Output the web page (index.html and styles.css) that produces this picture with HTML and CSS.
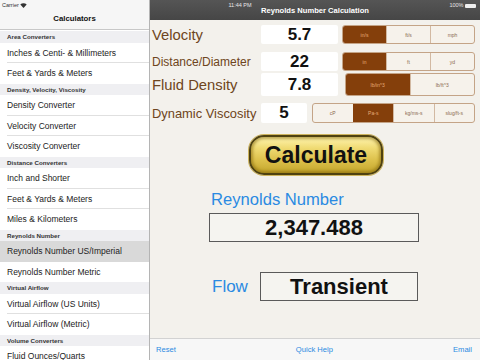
FILE: index.html
```html
<!DOCTYPE html>
<html lang="en">
<head>
  <meta charset="UTF-8">
  <title>Reynolds Number Calculation</title>
  <link rel="stylesheet" href="styles.css">
</head>
<body>

<div class="status">
  <span class="carrier">Carrier
    <svg width="7" height="5" viewBox="0 0 7 5"><path d="M3.5 5 L0.3 1.6 A4.6 4.6 0 0 1 6.7 1.6 Z" fill="#333"/></svg>
  </span>
  <span class="clock">11:44 PM</span>
  <span class="battery">100% <i class="cell"></i></span>
</div>

<div class="sidebar">
  <div class="side-nav">Calculators</div>
  <div class="list">
    <div class="peek"></div>
    <div class="sec">Area Converters</div>
    <div class="row">Inches &amp; Centi- &amp; Millimeters</div>
    <div class="row last">Feet &amp; Yards &amp; Meters</div>
    <div class="sec">Density, Velocity, Viscosity</div>
    <div class="row">Density Converter</div>
    <div class="row">Velocity Converter</div>
    <div class="row last">Viscosity Converter</div>
    <div class="sec">Distance Converters</div>
    <div class="row">Inch and Shorter</div>
    <div class="row">Feet &amp; Yards &amp; Meters</div>
    <div class="row last">Miles &amp; Kilometers</div>
    <div class="sec">Reynolds Number</div>
    <div class="row selected">Reynolds Number US/Imperial</div>
    <div class="row last">Reynolds Number Metric</div>
    <div class="sec">Virtual Airflow</div>
    <div class="row">Virtual Airflow (US Units)</div>
    <div class="row last">Virtual Airflow (Metric)</div>
    <div class="sec">Volume Converters</div>
    <div class="row last">Fluid Ounces/Quarts</div>
  </div>
</div>

<div class="main">
  <div class="main-nav">Reynolds Number Calculation</div>

  <div class="content">
    <div class="input r1">
      <span class="label big">Velocity</span>
      <span class="value">5.7</span>
      <div class="seg">
        <span class="on">in/s</span><span>ft/s</span><span>mph</span>
      </div>
    </div>
    <div class="input r2">
      <span class="label">Distance/Diameter</span>
      <span class="value">22</span>
      <div class="seg">
        <span class="on">in</span><span>ft</span><span>yd</span>
      </div>
    </div>
    <div class="input r3">
      <span class="label big">Fluid Density</span>
      <span class="value">7.8</span>
      <div class="seg">
        <span class="on">lb/in^3</span><span>lb/ft^3</span>
      </div>
    </div>
    <div class="input r4">
      <span class="label mid">Dynamic Viscosity</span>
      <span class="value short">5</span>
      <div class="seg">
        <span>cP</span><span class="on">Pa-s</span><span>kg/ms-s</span><span>slug/ft-s</span>
      </div>
    </div>

    <button class="calc">Calculate</button>

    <div class="result-title">Reynolds Number</div>
    <div class="result">2,347.488</div>

    <div class="flow">
      <span class="flow-label">Flow</span>
      <span class="result flow-box">Transient</span>
    </div>
  </div>

  <div class="toolbar">
    <span>Reset</span>
    <span>Quick Help</span>
    <span>Email</span>
  </div>
</div>

</body>
</html>
```

FILE: styles.css
```css
* { box-sizing: border-box; }
body {
  margin: 0; width: 480px; height: 360px; overflow: hidden;
  display: flex; font-family: "Liberation Sans", Arial, sans-serif;
  background: #fff;
}

/* status bar over both panes */
.status { position: absolute; top: 0; left: 0; width: 480px; height: 10px; font-size: 5.5px; }
.carrier { position: absolute; left: 2px; top: 2px; color: #333; }
.carrier svg { vertical-align: -0.5px; }
.clock { position: absolute; left: 0; right: 0; top: 2px; text-align: center; color: #e6e6e6; }
.battery { position: absolute; right: 4px; top: 2px; color: #e6e6e6; }
.cell { display: inline-block; width: 11px; height: 4px; background: #eee; border-radius: 1px; vertical-align: -0.5px; }

/* left list */
.sidebar { width: 150px; height: 360px; border-right: 1px solid #b4b4b4; overflow: hidden; flex: none; }
.side-nav {
  height: 30px; padding-top: 11px; background: #f6f6f6; border-bottom: 1px solid #c8c8c8;
  text-align: center; font-size: 7.8px; font-weight: bold; color: #111; line-height: 16px;
}
.peek { height: 1px; background: #fff; }
.sec {
  height: 11.5px; line-height: 12px; padding-left: 7px; background: #efeff2;
  font-size: 6.2px; font-weight: bold; color: #333; white-space: nowrap;
}
.row {
  height: 20.5px; line-height: 21px; padding-left: 7px; font-size: 8.5px; color: #222;
  white-space: nowrap;
  background: linear-gradient(#e0e0e0, #e0e0e0) left 7px bottom 0 / 100% 1px no-repeat #fff;
}
.row.last { background: #fff; }
.row.selected { background: #d9d9d9; }

/* right pane */
.main { flex: 1; display: flex; flex-direction: column; background: #f3f1ec; }
.main-nav {
  height: 20px; padding-top: 6px; background: linear-gradient(#555, #464646);
  color: #fff; text-align: center; font-size: 7.6px; font-weight: bold; line-height: 10px;
}
.content { flex: 1; padding-left: 2px; }

.input { display: flex; align-items: center; padding-right: 5px; }
.r1 { margin-top: 5px; height: 19px; }
.r2 { margin-top: 8px; height: 19px; }
.r3 { margin-top: 2px; height: 23px; }
.r4 { margin-top: 7px; height: 20px; }
.label { width: 109px; color: #6e4520; font-size: 12px; white-space: nowrap; }
.label.big { font-size: 14.8px; }
.label.mid { font-size: 12.9px; }
.value {
  width: 77px; height: 100%; background: #fff; border-radius: 2px;
  text-align: center; font-weight: bold; font-size: 17px; color: #111;
  display: flex; align-items: center; justify-content: center;
}
.value.short { width: 46px; }

.seg {
  margin-left: auto; height: 100%; display: flex;
  border: 1px solid #c4a487; border-radius: 3px; overflow: hidden; background: #f6f2eb;
}
.r1 .seg, .r2 .seg { width: 133px; }
.r3 .seg { width: 130px; }
.r4 .seg { width: 163px; }
.seg span {
  flex: 1; display: flex; align-items: center; justify-content: center;
  font-size: 5px; color: #8a6a4e; border-left: 1px solid #d2b9a2;
}
.seg span:first-child { border-left: none; }
.seg span.on { background: #843f0b; color: #e4ab78; border-color: #843f0b; }

.calc {
  display: block; margin: 12px auto 0; width: 134px; height: 40px;
  border: 2px solid #4f4210; border-radius: 15px;
  background: linear-gradient(#fff5b0 0%, #f0db74 30%, #dcc04a 65%, #c4a62c 100%);
  box-shadow: 0 0 0 1px #cdb45e, inset 0 0 3px 2px rgba(130, 100, 10, 0.55);
  font-family: "Liberation Sans", Arial, sans-serif; font-size: 23px; font-weight: bold; color: #111;
  padding: 0;
}

.result-title { margin: 15px 0 0 59px; font-size: 16.6px; line-height: 20px; color: #2a8ae2; }
.result {
  display: block; margin: 3px 0 0 57px; width: 210px; height: 29px;
  border: 1px solid #5a5a5a; background: #f5f4f0;
  text-align: center; font-size: 22px; font-weight: bold; line-height: 27px; color: #111;
}

.flow { display: flex; align-items: center; margin-top: 30px; padding-left: 60px; }
.flow-label { width: 48px; font-size: 17px; color: #2a8ae2; }
.flow-box { margin: 0; width: 158px; }

.toolbar {
  height: 22px; display: flex; justify-content: space-between; align-items: center;
  padding: 0 8px 0 6px; background: #f7f7f7; border-top: 1px solid #d2d2d2;
  font-size: 7.6px; color: #2a8ae2;
}
```
